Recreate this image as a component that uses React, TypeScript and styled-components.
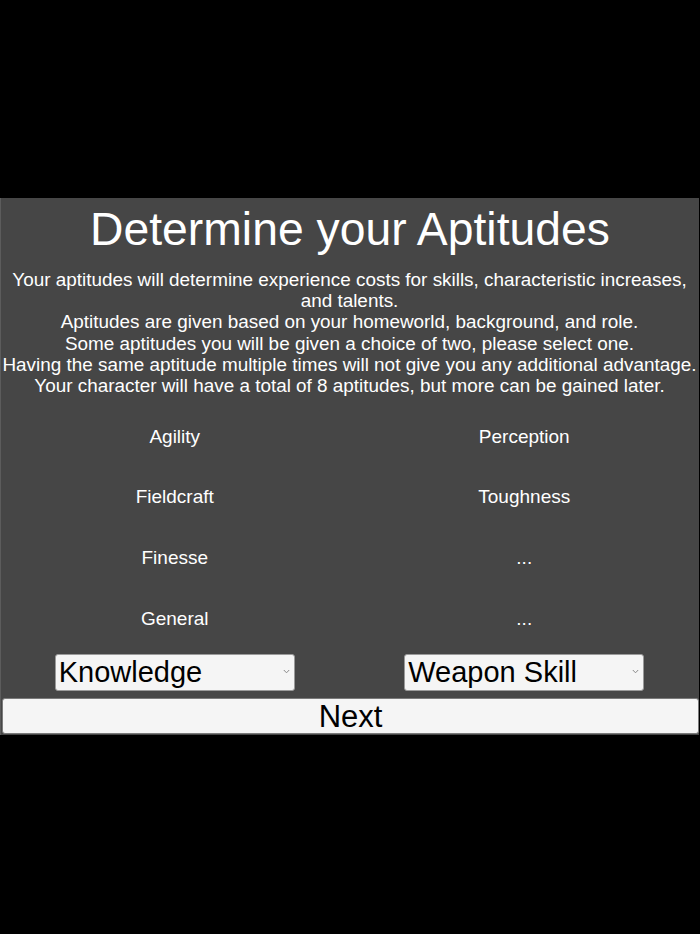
import React, { useState } from "react";
import styled, { createGlobalStyle } from "styled-components";

const GlobalStyle = createGlobalStyle`
  html, body {
    margin: 0;
    padding: 0;
    background: #000000;
    font-family: "Liberation Sans", Arial, sans-serif;
  }
`;

const Screen = styled.div`
  width: 700px;
  height: 934px;
  padding-top: 198px;
  box-sizing: border-box;
`;

const Panel = styled.section`
  width: 699px;
  height: 537px;
  box-sizing: border-box;
  background: #464646;
  border-left: 1px solid #5c5c5c;
  display: flex;
  flex-direction: column;
  padding-top: 5px;
  color: #ffffff;
`;

const Title = styled.h1`
  margin: 0;
  font-size: 46.3px;
  font-weight: 400;
  line-height: 52px;
  text-align: center;
`;

const Intro = styled.p`
  margin: 14px 0 0 -1px;
  font-size: 18.9px;
  line-height: 21.2px;
  text-align: center;
  white-space: pre;
`;

const AptitudeGrid = styled.div`
  margin-top: 10px;
  margin-left: -1px;
  display: grid;
  grid-template-columns: 1fr 1fr;
  grid-auto-rows: 60.7px;
`;

const Aptitude = styled.div`
  display: flex;
  align-items: center;
  justify-content: center;
  font-size: 19px;
`;

const ChoiceRow = styled.div`
  margin-top: 5px;
  margin-left: -1px;
  display: grid;
  grid-template-columns: 1fr 1fr;
  justify-items: center;
`;

const SelectWrap = styled.div`
  position: relative;
  width: 240px;
  height: 37px;
`;

const Select = styled.select`
  appearance: none;
  width: 100%;
  height: 100%;
  box-sizing: border-box;
  margin: 0;
  padding: 0 16px 0 3px;
  background: #f5f5f5;
  border: 1px solid #9a9a9a;
  border-radius: 3px;
  color: #000000;
  font-family: "Liberation Sans", Arial, sans-serif;
  font-size: 29px;
  outline: none;
`;

const Chevron = styled.svg`
  position: absolute;
  right: 5px;
  top: 15px;
  pointer-events: none;
`;

const NextButton = styled.button`
  margin: 7px 0 0 1px;
  width: 697px;
  height: 36px;
  padding: 0;
  background: #f5f5f5;
  border: 1px solid #7a7a7a;
  border-radius: 3px;
  color: #000000;
  font-family: "Liberation Sans", Arial, sans-serif;
  font-size: 31px;
  line-height: 36px;
  cursor: pointer;
`;

const introText = `Your aptitudes will determine experience costs for skills, characteristic increases,
and talents.
Aptitudes are given based on your homeworld, background, and role.
Some aptitudes you will be given a choice of two, please select one.
Having the same aptitude multiple times will not give you any additional advantage.
Your character will have a total of 8 aptitudes, but more can be gained later.`;

const aptitudes = [
  "Agility",
  "Perception",
  "Fieldcraft",
  "Toughness",
  "Finesse",
  "...",
  "General",
  "...",
];

const choices = [
  { value: "Knowledge", options: ["Knowledge", "Social"] },
  { value: "Weapon Skill", options: ["Weapon Skill", "Ballistic Skill"] },
];

function ChoiceSelect({ initial, options }: { initial: string; options: string[] }) {
  const [value, setValue] = useState(initial);
  return (
    <SelectWrap>
      <Select value={value} onChange={(e) => setValue(e.target.value)}>
        {options.map((o) => (
          <option key={o} value={o}>
            {o}
          </option>
        ))}
      </Select>
      <Chevron width="7" height="5" viewBox="0 0 7 5">
        <path d="M0.8 1 L3.5 3.8 L6.2 1" fill="none" stroke="#8a8a8a" strokeWidth="1" />
      </Chevron>
    </SelectWrap>
  );
}

export default function App() {
  return (
    <Screen>
      <GlobalStyle />
      <Panel>
        <Title>Determine your Aptitudes</Title>
        <Intro>{introText}</Intro>
        <AptitudeGrid>
          {aptitudes.map((a, i) => (
            <Aptitude key={i}>{a}</Aptitude>
          ))}
        </AptitudeGrid>
        <ChoiceRow>
          {choices.map((c) => (
            <ChoiceSelect key={c.value} initial={c.value} options={c.options} />
          ))}
        </ChoiceRow>
        <NextButton>Next</NextButton>
      </Panel>
    </Screen>
  );
}
